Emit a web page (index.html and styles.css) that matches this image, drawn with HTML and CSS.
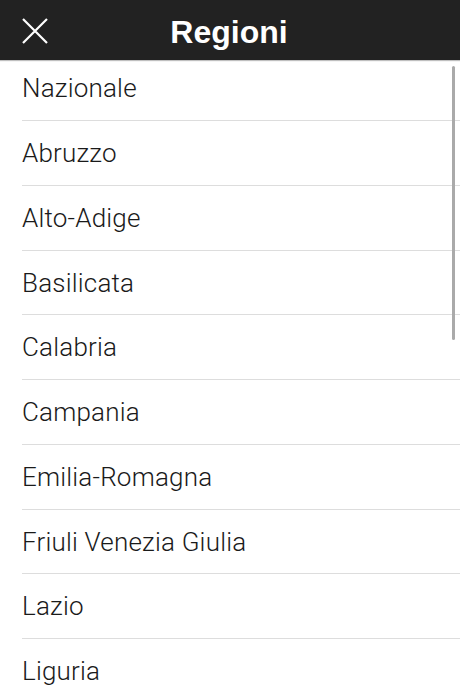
FILE: index.html
```html
<!DOCTYPE html>
<html lang="it">
<head>
  <meta charset="UTF-8" />
  <title>Regioni</title>
  <link rel="stylesheet" href="styles.css">
</head>
<body>

  <header class="topbar">
    <button class="close" aria-label="Chiudi">
      <svg width="26" height="26" viewBox="0 0 26 26">
        <path d="M1 1 L25 25 M25 1 L1 25" stroke="#fff" stroke-width="2.2" fill="none" />
      </svg>
    </button>
    <h1>Regioni</h1>
  </header>

  <div class="list-wrap">
    <ul class="regions" id="regions"></ul>
    <div class="scrollbar"></div>
  </div>

  <script>
    const regions = [
      'Nazionale', 'Abruzzo', 'Alto-Adige', 'Basilicata', 'Calabria',
      'Campania', 'Emilia-Romagna', 'Friuli Venezia Giulia', 'Lazio', 'Liguria'
    ];
    const list = document.getElementById('regions');

    regions.forEach(name => {
      const li = document.createElement('li');
      li.className = 'region';
      li.innerText = name;
      list.appendChild(li);
    });
  </script>
</body>
</html>
```

FILE: styles.css
```css
body {
  margin: 0;
  font-family: "Liberation Sans", Arial, sans-serif;
  background: #fff;
  color: #222;
  overflow: hidden;
}

.topbar {
  height: 60px;
  background: #222;
  display: flex;
  align-items: center;
  justify-content: center;
  position: relative;
  box-shadow: 0 1px 1px rgba(0,0,0,0.25);
  z-index: 2;
}

.topbar h1 {
  margin: 0 0 0 -2px;
  color: #fff;
  font-size: 32px;
  font-weight: bold;
  line-height: 1;
  padding-top: 3px;
}

.close {
  position: absolute;
  left: 22px;
  top: 18px;
  padding: 0;
  border: 0;
  background: none;
  display: flex;
}

.list-wrap {
  position: relative;
  height: 630px;
  overflow: hidden;
}

.regions {
  list-style: none;
  margin: 0;
  padding: 0;
}

.region {
  box-sizing: border-box;
  height: 64.75px;
  margin-left: 22px;
  padding-top: 19px;
  border-bottom: 1px solid #ddd;
  font-family: Roboto, "Liberation Sans", sans-serif;
  font-weight: 300;
  font-size: 26px;
  letter-spacing: 0.2px;
  line-height: 1;
  color: #1a1a1a;
}

.region:first-child {
  height: 61px;
  padding-top: 15.25px;
}

.scrollbar {
  position: absolute;
  right: 5px;
  top: 6px;
  width: 3px;
  height: 274px;
  border-radius: 2px;
  background: #aaa;
}
```
